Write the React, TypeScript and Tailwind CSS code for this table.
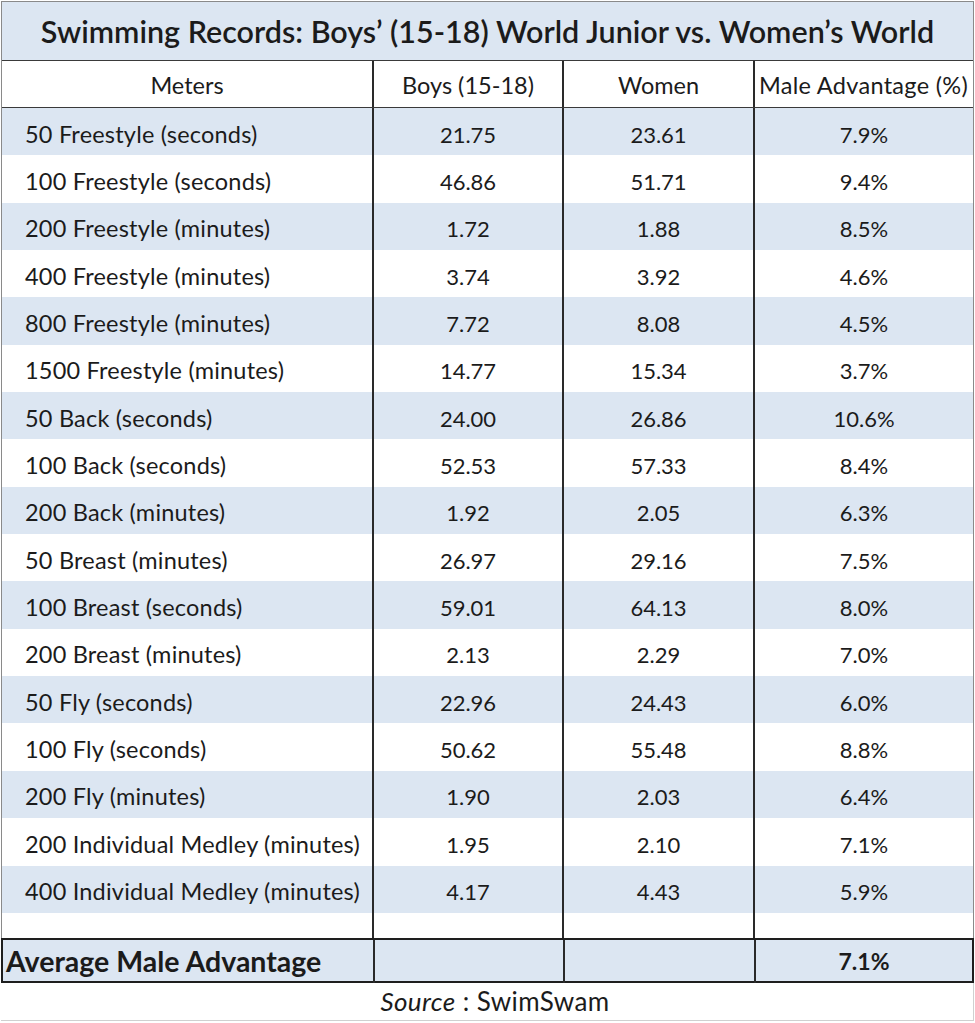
import React from "react";

const rows: [string, string, string, string][] = [
  ["50 Freestyle (seconds)", "21.75", "23.61", "7.9%"],
  ["100 Freestyle (seconds)", "46.86", "51.71", "9.4%"],
  ["200 Freestyle (minutes)", "1.72", "1.88", "8.5%"],
  ["400 Freestyle (minutes)", "3.74", "3.92", "4.6%"],
  ["800 Freestyle (minutes)", "7.72", "8.08", "4.5%"],
  ["1500 Freestyle (minutes)", "14.77", "15.34", "3.7%"],
  ["50 Back (seconds)", "24.00", "26.86", "10.6%"],
  ["100 Back (seconds)", "52.53", "57.33", "8.4%"],
  ["200 Back (minutes)", "1.92", "2.05", "6.3%"],
  ["50 Breast (minutes)", "26.97", "29.16", "7.5%"],
  ["100 Breast (seconds)", "59.01", "64.13", "8.0%"],
  ["200 Breast (minutes)", "2.13", "2.29", "7.0%"],
  ["50 Fly (seconds)", "22.96", "24.43", "6.0%"],
  ["100 Fly (seconds)", "50.62", "55.48", "8.8%"],
  ["200 Fly (minutes)", "1.90", "2.03", "6.4%"],
  ["200 Individual Medley (minutes)", "1.95", "2.10", "7.1%"],
  ["400 Individual Medley (minutes)", "4.17", "4.43", "5.9%"],
];

const font = { fontFamily: "Lato, 'Open Sans', sans-serif" };

export default function App() {
  return (
    <div className="w-[975px] h-[1023px] bg-white text-[#1b1b1b] pt-px pl-px" style={font}>
      <div className="w-[973px] border-l border-t border-r border-[#8a8a8a]">
        <div className="h-[59px] bg-[#dce6f2] border-b-[1.5px] border-[#3a3a3a] flex items-center justify-center pt-[2px] text-[30.5px] font-semibold">
          Swimming Records: Boys’ (15-18) World Junior vs. Women’s World
        </div>
        <div className="grid grid-cols-[370px_190px_191px_1fr] h-[47px] bg-white border-b-[1.5px] border-[#3a3a3a] text-[23.5px]">
          <div className="flex items-center justify-center pt-[3px]">Meters</div>
          <div className="flex items-center justify-center pt-[3px] border-l-2 border-[#2a2a2a]">Boys (15-18)</div>
          <div className="flex items-center justify-center pt-[3px] border-l-2 border-[#2a2a2a]">Women</div>
          <div className="flex items-center pl-[4px] pt-[3px] border-l-2 border-[#2a2a2a] whitespace-nowrap tracking-[0.3px]">Male Advantage (%)</div>
        </div>
        {rows.map((r, i) => (
          <div
            key={i}
            className={`grid grid-cols-[370px_190px_191px_1fr] h-[47.35px] text-[22px] ${i % 2 === 0 ? "bg-[#dce6f2]" : "bg-white"}`}
          >
            <div className="flex items-center pl-[23px] pt-[5px] whitespace-nowrap text-[23.5px] tracking-[0.2px]">{r[0]}</div>
            <div className="flex items-center justify-center pt-[5px] border-l-2 border-[#2a2a2a]">{r[1]}</div>
            <div className="flex items-center justify-center pt-[5px] border-l-2 border-[#2a2a2a]">{r[2]}</div>
            <div className="flex items-center justify-center pt-[5px] border-l-2 border-[#2a2a2a]">{r[3]}</div>
          </div>
        ))}
        <div className="grid grid-cols-[370px_190px_191px_1fr] h-[25px] bg-white">
          <div />
          <div className="border-l-2 border-[#2a2a2a]" />
          <div className="border-l-2 border-[#2a2a2a]" />
          <div className="border-l-2 border-[#2a2a2a]" />
        </div>
      </div>
      <div className="w-[973px] grid grid-cols-[370px_190px_191px_1fr] h-[45px] bg-[#dce6f2] border-2 border-[#1e1e1e]">
        <div className="flex items-center pl-[3px] pt-[0px] text-[28.5px] font-bold whitespace-nowrap">Average Male Advantage</div>
        <div className="border-l-2 border-[#2a2a2a]" />
        <div className="border-l-2 border-[#2a2a2a]" />
        <div className="flex items-center justify-center pt-[1px] border-l-2 border-[#2a2a2a] text-[23px] font-bold">7.1%</div>
      </div>
      <div className="w-[973px] h-[38px] border-b border-r border-[#d0d0d0] flex items-center justify-center pl-[16px] text-[26px] tracking-[0.4px]">
        <span className="italic">Source</span>
        <span>&nbsp;: SwimSwam</span>
      </div>
    </div>
  );
}
